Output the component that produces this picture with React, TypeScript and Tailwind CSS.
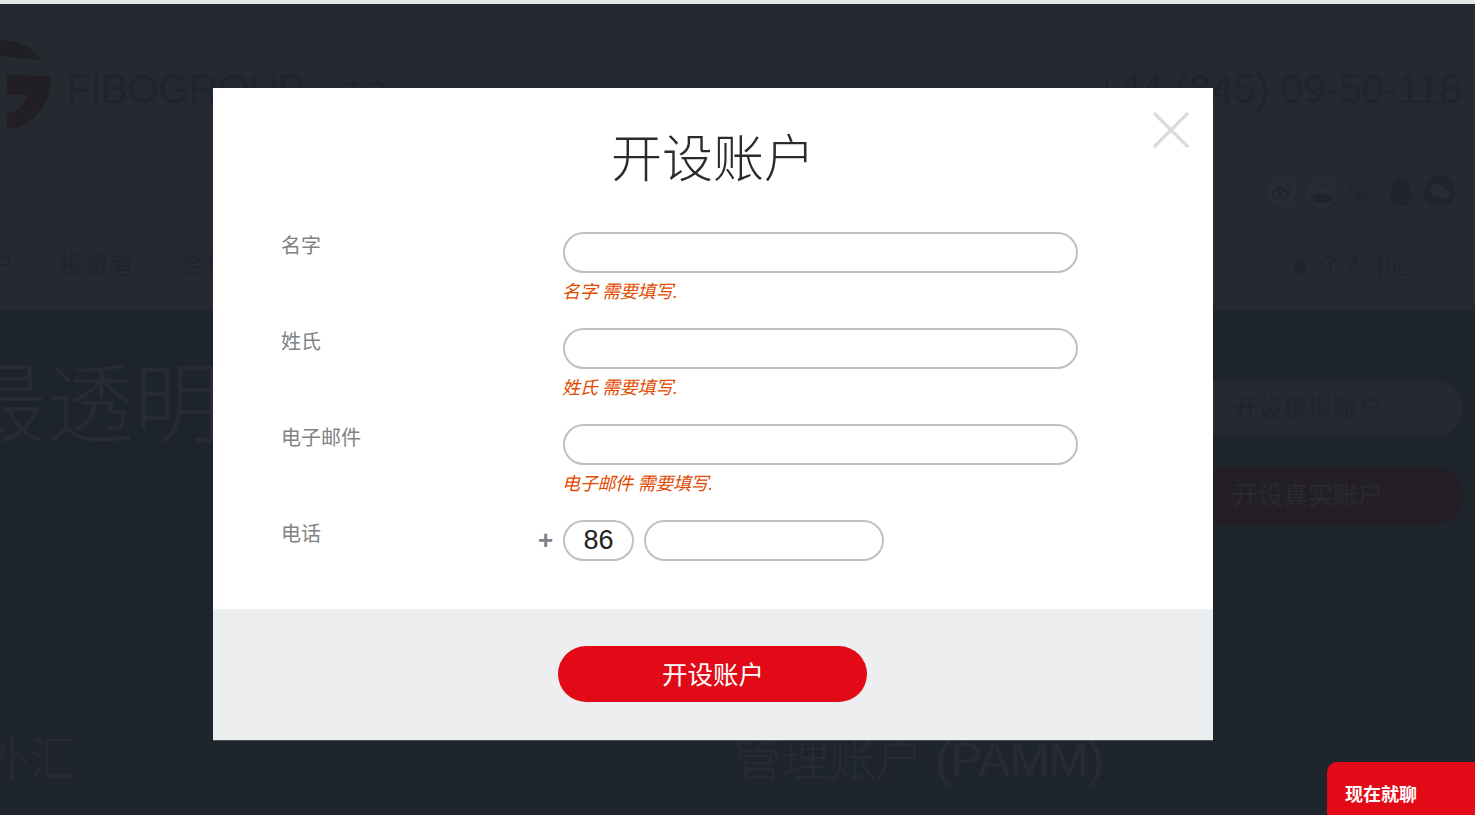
import { Lock } from 'lucide-react';
import { FaQq, FaWeibo, FaWeixin } from 'react-icons/fa';

const FONT = "font-['Liberation_Sans','Noto_Sans_CJK_SC',sans-serif]";

function Logo() {
  return (
    <svg width="52" height="92" viewBox="0 0 52 92" className="shrink-0">
      <path d="M0 0C16 0 32 6 41 19L41 20L0 16Z" fill="#211f25" />
      <path d="M7 35L51 36C52 62 36 86 7 89L7 73C17 72 24 66 27 55L7 55Z" fill="#211f25" />
    </svg>
  );
}

function SocialIcons() {
  return (
    <div className="flex items-center gap-[8.5px] text-[#20252b]">
      <span className="flex h-[31px] w-[31px] items-center justify-center rounded-full bg-[#282d34]">
        <FaWeibo size={20} />
      </span>
      <svg width="32" height="32" viewBox="0 0 32 32">
        <circle cx="16" cy="16" r="15.5" fill="#282d34" />
        <path d="M4 22C10 15 22 15 28 22C24 29 8 29 4 22Z" fill="#20252b" />
        <circle cx="12" cy="8" r="2.5" fill="none" stroke="#20252b" />
        <circle cx="20" cy="8" r="2.5" fill="none" stroke="#20252b" />
      </svg>
      <span className="flex h-[31px] w-[31px] flex-col items-center justify-center rounded-full border border-dashed border-[#2a2f36] text-[8px] font-bold leading-[10px]">
        <span>youku</span>
        <span>优酷</span>
      </span>
      <FaQq size={28} className="mx-[1px]" />
      <span className="flex h-[31px] w-[31px] items-center justify-center rounded-full bg-[#20252b] text-[#282d34]">
        <FaWeixin size={20} />
      </span>
    </div>
  );
}

function PageHeader() {
  return (
    <header className="h-[306px] bg-[#252a31] text-[#1f252c]">
      <div className="flex h-[130px] pt-[36px]">
        <Logo />
        <span className="ml-[14px] mt-[23px] text-[41px] leading-[52px] tracking-[-0.9px]">FIBOGROUP</span>
        <span className="ml-[38px] mt-[35px] text-2xl leading-8">中文</span>
        <span className="ml-auto mr-[13px] mt-[23px] text-[40px] leading-[52px] tracking-[0.2px]">+44 (845) 09-50-118</span>
      </div>
      <div className="flex h-[62px] justify-end pr-[20px] pt-[53px]">
        <SocialIcons />
      </div>
      <nav className="mt-[50px] flex h-[40px] items-center text-[25px] text-[#20252c]">
        <span className="-ml-3 w-[71px]">户</span>
        <span>投资者</span>
        <span className="ml-[46px]">合作</span>
        <Lock size={16} fill="currentColor" className="ml-auto" />
        <span className="ml-[10px] mr-[59px] text-[24.5px]">个人中心</span>
      </nav>
    </header>
  );
}

function Hero() {
  return (
    <section className="h-[505px] bg-gradient-to-b from-[#1d242b] to-[#1f252c] text-[#272c33]">
      <div className="flex h-[345px] justify-between pt-[46px]">
        <h1 className="-ml-[40px] text-[87px] font-light leading-[100px]">最透明</h1>
        <div className="mr-3 mt-[24px] flex flex-col gap-[30px]">
          <div className="flex h-[57px] w-[300px] items-center rounded-full bg-[#252a31] pl-[70px] text-[25px] text-[#1f252c]">开设模拟账户</div>
          <div className="flex h-[58px] w-[300px] items-center rounded-full bg-[#241f24] pl-[70px] text-[25px] text-[#272b2f]">开设真实账户</div>
        </div>
      </div>
      <div className="mt-[75px] flex h-[60px] items-center text-[48px] font-light leading-[60px]">
        <span className="-ml-[19px]">外汇</span>
        <span className="ml-[657px] tracking-[-0.8px]">管理账户 (PAMM)</span>
      </div>
    </section>
  );
}

interface FieldProps {
  label: string;
}

function Field({ label }: FieldProps) {
  return (
    <div className="flex h-[96px]">
      <label className="w-[282px] pt-px text-[20px] leading-[26px] text-[#808285]">{label}</label>
      <div>
        <input
          type="text"
          className="block h-[41px] w-[515px] rounded-full border-2 border-[#bdc1c6] bg-white px-4 outline-none"
        />
        <p className="-ml-px mt-[7px] text-[18px] italic leading-[24px] tracking-[-0.3px] text-[#e14a00]">{label} 需要填写.</p>
      </div>
    </div>
  );
}

function SignupModal() {
  return (
    <div className="absolute left-[213px] top-[88px] w-[1000px] bg-white">
      <button type="button" className="absolute right-[24px] top-[24px] text-[#dcdcdc]">
        <svg width="36" height="36" viewBox="0 0 36 36" className="block">
          <path d="M1 1L35 35M35 1L1 35" stroke="currentColor" strokeWidth="3.5" fill="none" />
        </svg>
      </button>
      <div className="h-[521px] pl-[68px] pt-[42px]">
        <h2 className="-ml-[68px] text-center text-[51px] font-light leading-[60px] text-[#2b2b2b]">开设账户</h2>
        <div className="mt-[42px]">
          <Field label="名字" />
          <Field label="姓氏" />
          <Field label="电子邮件" />
          <div className="flex">
            <label className="w-[257px] pt-px text-[20px] leading-[26px] text-[#808285]">电话</label>
            <span className="w-[25px] pt-[4px] text-[26px] font-bold leading-[33px] text-[#808285]">+</span>
            <input
              type="text"
              defaultValue="86"
              className="block h-[41px] w-[71px] rounded-full border-2 border-[#bdc1c6] bg-white pb-px text-center text-[27px] text-[#222] outline-none"
            />
            <input
              type="text"
              className="ml-[10px] block h-[41px] w-[240px] rounded-full border-2 border-[#bdc1c6] bg-white px-4 outline-none"
            />
          </div>
        </div>
      </div>
      <div className="flex h-[132px] items-start justify-center border-b border-[#4d5258] bg-[#edeef0] pt-[37px]">
        <button type="button" className="-ml-[2px] h-[56px] w-[309px] rounded-full bg-[#e30a17] pl-[2px] pt-[3px] text-[25.5px] text-white">
          开设账户
        </button>
      </div>
    </div>
  );
}

export default function App() {
  return (
    <div className={`relative h-[815px] overflow-hidden bg-[#1e242b] ${FONT}`}>
      <div className="h-1 bg-[#e6e6e6]" />
      <PageHeader />
      <Hero />
      <SignupModal />
      <div className="absolute bottom-0 right-0 flex h-[53px] w-[148px] items-start rounded-tl-[10px] bg-[#e30a17] pl-[18px] pt-[20px] text-[18px] font-bold leading-[26px] text-white">
        现在就聊
      </div>
    </div>
  );
}
